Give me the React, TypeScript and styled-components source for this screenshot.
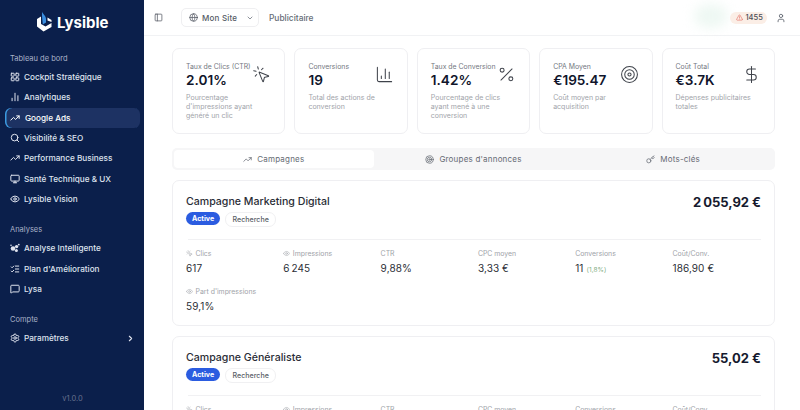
import React from 'react';
import styled, { createGlobalStyle } from 'styled-components';
import {
  LayoutGrid, ChartNoAxesColumn, TrendingUp, Search, Monitor, Eye, ListChecks, MessageSquare, Settings,
  ChevronRight, ChevronDown, PanelLeft, Globe, TriangleAlert, User, MousePointerClick, ChartColumn,
  Percent, Target, DollarSign, Key,
} from 'lucide-react';

const GlobalStyle = createGlobalStyle`
  html, body { margin: 0; padding: 0; height: 100%; overflow: hidden; background: #fff; }
  body { font-family: "Inter", "Liberation Sans", sans-serif; }
  #root { height: 100%; }
`;

const Shell = styled.div`
  display: flex;
  width: 800px;
  height: 410px;
  overflow: hidden;
`;

const Sidebar = styled.aside`
  width: 144px;
  flex: none;
  height: 410px;
  background: #0b1f4b;
  color: #e6e9f2;
  display: flex;
  flex-direction: column;
  box-sizing: border-box;
  padding: 0 4px 0 5px;
`;

const Brand = styled.div`
  height: 44px;
  display: flex;
  align-items: center;
  gap: 4px;
  padding-left: 31px;
  margin-bottom: 9px;
  font-size: 15px;
  font-weight: 700;
  color: #fff;
`;

const SectionLabel = styled.div<{ $top?: number }>`
  font-size: 7.5px;
  line-height: 12px;
  color: #a9b2c8;
  padding-left: 5px;
  margin-top: ${(p) => p.$top ?? 0}px;
  margin-bottom: 2px;
`;

const NavItem = styled.div<{ $active?: boolean }>`
  height: 20.3px;
  display: flex;
  align-items: center;
  gap: 4px;
  font-size: 8.2px;
  font-weight: 500;
  color: ${(p) => (p.$active ? '#fff' : '#dfe3ee')};
  padding-left: 5px;
  border-radius: 6px;
  box-sizing: border-box;
  background: ${(p) => (p.$active ? '#1d3263' : 'transparent')};
  box-shadow: ${(p) => (p.$active ? 'inset 1.5px 0 0 #3b9ae1' : 'none')};
  span { flex: 1; ${(p) => (p.$active ? 'margin-left: 1px;' : '')} }
  svg { flex: none; }
`;

const Version = styled.div`
  margin-top: auto;
  text-align: center;
  font-size: 7.5px;
  color: #66708c;
  padding-bottom: 7px;
`;

const Main = styled.main`
  flex: 1;
  min-width: 0;
  height: 410px;
  overflow: hidden;
  display: flex;
  flex-direction: column;
`;

const TopBar = styled.header`
  height: 36px;
  flex: none;
  box-sizing: border-box;
  border-bottom: 1px solid #f1f2f4;
  display: flex;
  align-items: center;
  padding: 0 14px 0 10px;
  position: relative;
`;

const SiteSelect = styled.div`
  margin-left: 18px;
  height: 19px;
  width: 78px;
  box-sizing: border-box;
  border: 1px solid #efeff1;
  border-radius: 5px;
  display: flex;
  align-items: center;
  gap: 4px;
  padding-left: 7px;
  font-size: 8px;
  font-weight: 500;
  letter-spacing: 0.2px;
  color: #555b66;
  span { margin-right: 5px; }
`;

const Crumb = styled.div`
  margin-left: 10px;
  font-size: 8.4px;
  font-weight: 500;
  color: #666c76;
`;

const Alert = styled.div`
  margin-left: auto;
  height: 12px;
  width: 37px;
  box-sizing: border-box;
  padding-left: 6px;
  display: flex;
  align-items: center;
  gap: 2.5px;
  border-radius: 7px;
  background: #fbeee6;
  font-size: 7.5px;
  font-weight: 500;
  color: #4b4f58;
  position: relative;
`;

const Glow = styled.div`
  position: absolute;
  right: 72px;
  top: 4px;
  width: 34px;
  height: 24px;
  border-radius: 50%;
  background: #eef8f3;
  filter: blur(6px);
`;

const AccountIcon = styled.div`
  margin-left: 9px;
  display: flex;
  color: #5c626c;
`;

const Content = styled.div`
  padding: 12px 25px 0 28px;
  display: flex;
  flex-direction: column;
`;

const StatGrid = styled.div`
  display: grid;
  grid-template-columns: repeat(5, 113.4px);
  justify-content: space-between;
`;

const StatCard = styled.div`
  height: 86px;
  box-sizing: border-box;
  border: 1px solid #efeff2;
  border-radius: 7px;
  padding: 13px 12px 0 13px;
  position: relative;
`;

const StatLabel = styled.div`
  font-size: 6.9px;
  line-height: 10px;
  color: #74787f;
  white-space: nowrap;
`;

const StatValue = styled.div`
  font-size: 13.6px;
  line-height: 16px;
  font-weight: 600;
  color: #10152b;
`;

const StatHint = styled.div`
  font-size: 7px;
  line-height: 9.2px;
  color: #a1a4aa;
  margin-top: 5px;
  max-width: 82px;
`;

const StatIcon = styled.div`
  position: absolute;
  right: 13px;
  top: 16px;
  display: flex;
  color: #3f434b;
`;

const Tabs = styled.div`
  margin-top: 14px;
  height: 22px;
  background: #f6f6f7;
  border-radius: 5px;
  display: grid;
  grid-template-columns: repeat(3, 1fr);
  padding: 2px;
  box-sizing: border-box;
`;

const Tab = styled.div<{ $active?: boolean }>`
  display: flex;
  align-items: center;
  justify-content: center;
  gap: 5px;
  font-size: 8px;
  font-weight: 400;
  letter-spacing: 0.2px;
  color: #666b74;
  border-radius: 4px;
  background: ${(p) => (p.$active ? '#fff' : 'transparent')};
`;

const CampaignCard = styled.section`
  margin-top: 10px;
  box-sizing: border-box;
  border: 1px solid #efeff2;
  border-radius: 7px;
  padding: 13px 13px 0 13px;
  height: 146px;
  flex: none;
`;

const CardHead = styled.div`
  display: flex;
  justify-content: space-between;
  align-items: flex-start;
`;

const CardTitle = styled.h2`
  margin: 0;
  font-size: 10.6px;
  line-height: 15px;
  font-weight: 500;
  color: #2a2d36;
`;

const Amount = styled.div`
  font-size: 13px;
  line-height: 17px;
  font-weight: 700;
  color: #161a2e;
`;

const Badges = styled.div`
  display: flex;
  gap: 5px;
  margin-top: 1px;
`;

const Badge = styled.div<{ $solid?: boolean }>`
  height: 13px;
  display: flex;
  align-items: center;
  padding: 0 6px;
  border-radius: 7px;
  font-size: 7.1px;
  font-weight: ${(p) => (p.$solid ? 700 : 500)};
  color: ${(p) => (p.$solid ? '#fff' : '#5b5f68')};
  background: ${(p) => (p.$solid ? '#2b5ce0' : '#fff')};
  border: ${(p) => (p.$solid ? '0' : '1px solid #f0f0f2')};
  min-width: ${(p) => (p.$solid ? '22px' : '37px')};
  justify-content: center;
`;

const Divider = styled.hr`
  margin: 12px 0 0 2px;
  border: 0;
  border-top: 1px solid #f1f1f3;
`;

const Metrics = styled.div`
  display: grid;
  grid-template-columns: repeat(6, 97.3px);
  row-gap: 10px;
  margin-top: 9px;
`;

const MetricLabel = styled.div`
  display: flex;
  align-items: center;
  gap: 2.5px;
  font-size: 6.9px;
  line-height: 9px;
  color: #a0a3a9;
  white-space: nowrap;
`;

const MetricValue = styled.div`
  margin-top: 4px;
  font-size: 10px;
  line-height: 13px;
  color: #2b2e36;
  letter-spacing: 0.1px;
  small { font-size: 6.5px; color: #7fae84; }
`;

const LogoMark = () => (
  <svg width="17" height="22" viewBox="0 0 17 22" fill="none">
    <path d="M6 0.5 C6.5 3 10 4.5 10 8 L10 11.5 L6.8 13.5 L6 5 Z" fill="#3b8fe0" />
    <path d="M5 5.5 L1 8 V15.5 L7.5 20.5 L15.5 16 V12 L9.5 15.6 L5 13 Z" fill="#fff" />
    <path d="M11.5 6.5 L15.5 9 V11 L11.5 9.5 Z" fill="#fff" />
  </svg>
);

const ClusterIcon = () => (
  <svg width="10" height="10" viewBox="0 0 10 10" fill="currentColor">
    <circle cx="3" cy="5.5" r="2.3" />
    <circle cx="6.6" cy="3.6" r="1.7" />
    <circle cx="6.4" cy="7.4" r="1.5" />
    <circle cx="8.8" cy="1.6" r="0.9" />
    <circle cx="1" cy="2.2" r="0.8" />
  </svg>
);

const stats = [
  { label: 'Taux de Clics (CTR)', value: '2.01%', hint: "Pourcentage d'impressions ayant généré un clic", Icon: MousePointerClick },
  { label: 'Conversions', value: '19', hint: 'Total des actions de conversion', Icon: ChartColumn },
  { label: 'Taux de Conversion', value: '1.42%', hint: 'Pourcentage de clics ayant mené à une conversion', Icon: Percent },
  { label: 'CPA Moyen', value: '€195.47', hint: 'Coût moyen par acquisition', Icon: Target },
  { label: 'Coût Total', value: '€3.7K', hint: 'Dépenses publicitaires totales', Icon: DollarSign },
];

const metrics = [
  { label: 'Clics', value: '617', Icon: MousePointerClick },
  { label: 'Impressions', value: '6\u2009245', Icon: Eye },
  { label: 'CTR', value: '9,88%' },
  { label: 'CPC moyen', value: '3,33 €' },
  { label: 'Conversions', value: '11', extra: '(1,8%)' },
  { label: 'Coût/Conv.', value: '186,90 €' },
  { label: "Part d'impressions", value: '59,1%', Icon: Eye },
];

const secondMetrics = metrics.slice(0, 6).map((m) => ({ ...m, value: '' }));

const MetricList = ({ items }: { items: typeof metrics }) => (
  <Metrics>
    {items.map(({ label, value, Icon, extra }) => (
      <div key={label}>
        <MetricLabel>
          {Icon && <Icon size={7} strokeWidth={1.8} />}
          {label}
        </MetricLabel>
        <MetricValue>
          {value} {extra && <small>{extra}</small>}
        </MetricValue>
      </div>
    ))}
  </Metrics>
);

export default function App() {
  return (
    <Shell>
      <GlobalStyle />
      <Sidebar>
        <Brand>
          <LogoMark />
          Lysible
        </Brand>
        <SectionLabel>Tableau de bord</SectionLabel>
        <NavItem><LayoutGrid size={10} strokeWidth={2.4} /><span>Cockpit Stratégique</span></NavItem>
        <NavItem><ChartNoAxesColumn size={10} strokeWidth={2.4} /><span>Analytiques</span></NavItem>
        <NavItem $active><TrendingUp size={10} strokeWidth={2.4} /><span>Google Ads</span></NavItem>
        <NavItem><Search size={10} strokeWidth={2.4} /><span>Visibilité &amp; SEO</span></NavItem>
        <NavItem><TrendingUp size={10} strokeWidth={2.4} /><span>Performance Business</span></NavItem>
        <NavItem><Monitor size={10} strokeWidth={2.4} /><span>Santé Technique &amp; UX</span></NavItem>
        <NavItem><Eye size={10} strokeWidth={2.4} /><span>Lysible Vision</span></NavItem>
        <SectionLabel $top={15}>Analyses</SectionLabel>
        <NavItem><ClusterIcon /><span>Analyse Intelligente</span></NavItem>
        <NavItem><ListChecks size={10} strokeWidth={2.4} /><span>Plan d'Amélioration</span></NavItem>
        <NavItem><MessageSquare size={10} strokeWidth={2.4} /><span>Lysa</span></NavItem>
        <SectionLabel $top={15}>Compte</SectionLabel>
        <NavItem><Settings size={10} strokeWidth={2.4} /><span>Paramètres</span><ChevronRight size={9} strokeWidth={3} style={{ marginRight: 5 }} /></NavItem>
        <Version>v1.0.0</Version>
      </Sidebar>
      <Main>
        <TopBar>
          <PanelLeft size={9} color="#555b66" />
          <SiteSelect>
            <Globe size={9} />
            <span>Mon Site</span>
            <ChevronDown size={8} />
          </SiteSelect>
          <Crumb>Publicitaire</Crumb>
          <Glow />
          <Alert>
            <TriangleAlert size={7} color="#e2685c" />
            1455
          </Alert>
          <AccountIcon><User size={10} /></AccountIcon>
        </TopBar>
        <Content>
          <StatGrid>
            {stats.map(({ label, value, hint, Icon }) => (
              <StatCard key={label}>
                <StatLabel>{label}</StatLabel>
                <StatValue>{value}</StatValue>
                <StatHint>{hint}</StatHint>
                <StatIcon><Icon size={19} strokeWidth={1.3} /></StatIcon>
              </StatCard>
            ))}
          </StatGrid>
          <Tabs>
            <Tab $active><TrendingUp size={9} />Campagnes</Tab>
            <Tab><Target size={9} />Groupes d'annonces</Tab>
            <Tab><Key size={9} />Mots-clés</Tab>
          </Tabs>
          <CampaignCard>
            <CardHead>
              <CardTitle>Campagne Marketing Digital</CardTitle>
              <Amount>2{'\u2009'}055,92 €</Amount>
            </CardHead>
            <Badges><Badge $solid>Active</Badge><Badge>Recherche</Badge></Badges>
            <Divider />
            <MetricList items={metrics} />
          </CampaignCard>
          <CampaignCard>
            <CardHead>
              <CardTitle>Campagne Généraliste</CardTitle>
              <Amount>55,02 €</Amount>
            </CardHead>
            <Badges><Badge $solid>Active</Badge><Badge>Recherche</Badge></Badges>
            <Divider />
            <MetricList items={secondMetrics} />
          </CampaignCard>
        </Content>
      </Main>
    </Shell>
  );
}
